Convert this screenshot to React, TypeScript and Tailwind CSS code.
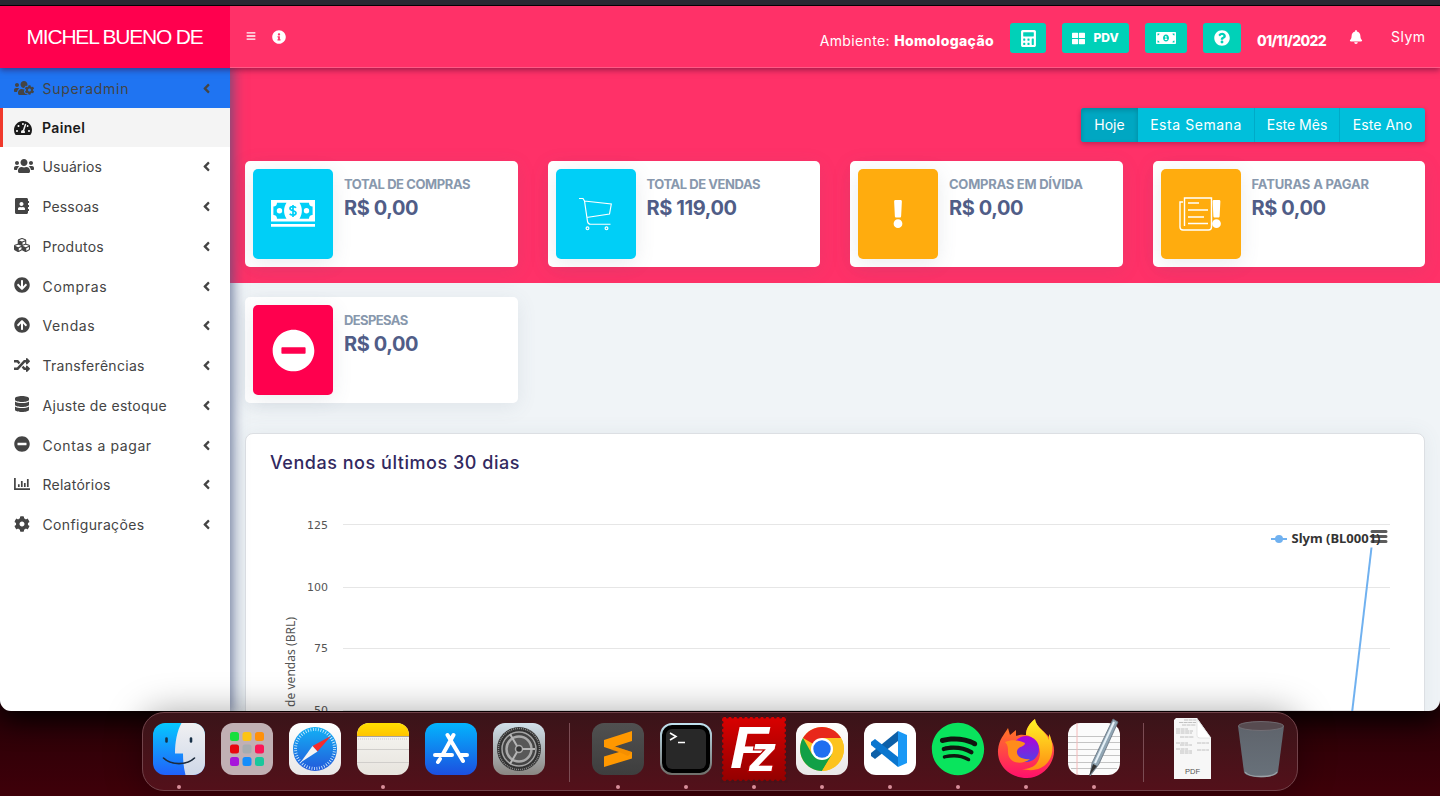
import React, { ReactNode } from "react";
import {
  FaAddressBook, FaAngleLeft, FaArrowCircleDown, FaArrowCircleUp, FaBars, FaBell, FaCalculator,
  FaCog, FaCubes, FaDatabase, FaExclamation, FaInfoCircle, FaMinusCircle, FaMoneyBillAlt,
  FaQuestionCircle, FaRandom, FaSpotify, FaTachometerAlt, FaThLarge, FaUsers, FaUsersCog,
} from "react-icons/fa";

function ReportIcon() {
  return (
    <svg width="16" height="16" viewBox="0 0 16 16" fill="none" stroke="#444" strokeWidth="1.7">
      <path d="M.9 2v11.200H16" /><path d="M4.800 11V8.200M7.800 11V5M10.800 11V7M13.800 11V3" />
    </svg>
  );
}

const menu = [
  { label: "Usuários", icon: <FaUsers size={20} />, track: "tracking-[0.1px]" },
  { label: "Pessoas", icon: <FaAddressBook size={16} />, track: "tracking-[0.15px]" },
  { label: "Produtos", icon: <FaCubes size={16} />, track: "tracking-[0.25px]" },
  { label: "Compras", icon: <FaArrowCircleDown size={16} />, track: "tracking-[0.7px]" },
  { label: "Vendas", icon: <FaArrowCircleUp size={16} />, track: "tracking-[0.6px]" },
  { label: "Transferências", icon: <FaRandom size={16} />, track: "tracking-[0.3px]" },
  { label: "Ajuste de estoque", icon: <FaDatabase size={16} />, track: "tracking-[0.3px]" },
  { label: "Contas a pagar", icon: <FaMinusCircle size={16} />, track: "tracking-[0.6px]" },
  { label: "Relatórios", icon: <ReportIcon />, track: "tracking-[0.25px]" },
  { label: "Configurações", icon: <FaCog size={16} />, track: "tracking-[0.35px]" },
];

function Sidebar() {
  return (
    <nav className="w-[230px] shrink-0 bg-white text-[14px] text-[#444] z-10 shadow-[0_0_12px_3px_rgba(70,85,130,0.75)]">
      <div className="flex h-10 items-center bg-[#1f74f2] pl-[14px] pr-[16px]">
        <FaUsersCog size={20} className="w-5" />
        <span className="ml-[8.5px] flex-1 tracking-[0.7px]">Superadmin</span>
        <FaAngleLeft size={15} />
      </div>
      <div className="flex h-[39px] items-center border-l-3 border-[#f0392b] bg-[#f4f4f4] pl-[11px] font-semibold text-[#1a1a1a]">
        <FaTachometerAlt size={18} className="w-[18px]" />
        <span className="ml-[10px] tracking-[0.35px]">Painel</span>
      </div>
      {menu.map((m) => (
        <div key={m.label} className="flex h-[39.75px] items-center pl-[14px] pr-[16px]">
          <span className="mb-[2px] flex w-[28.5px] shrink-0">{m.icon}</span>
          <span className={"flex-1 font-normal " + m.track}>{m.label}</span>
          <FaAngleLeft size={15} />
        </div>
      ))}
    </nav>
  );
}

function Header() {
  const btn = "flex h-[30px] items-center justify-center rounded-[3px] bg-[#00d1b8]";
  return (
    <header className="relative z-20 flex h-[62px] shrink-0 text-white shadow-[0_2px_6px_rgba(60,0,40,0.5)]">
      <div className="flex w-[230px] items-center bg-[#ff004e] pl-[26.5px] font-['Liberation_Sans',sans-serif] text-[21px] tracking-[-1.2px] whitespace-nowrap">
        MICHEL BUENO DE
      </div>
      <div className="flex flex-1 border-b border-[#ff5a86] bg-[#ff3168] pl-4 pr-[15px] text-[14px]">
        <FaBars size={10} className="mt-[25px]" />
        <FaInfoCircle size={14} className="ml-4 mt-6" />
        <div className="ml-auto flex items-start pt-[17px] whitespace-nowrap">
          <span className="mt-[7px] mr-4 tracking-[0.35px]">Ambiente: <b className="font-extrabold">Homologação</b></span>
          <span className={btn + " mr-4 w-9"}><FaCalculator size={17} /></span>
          <span className={btn + " mr-4 w-[67px] gap-2 text-[12px] font-extrabold"}><FaThLarge size={13} />PDV</span>
          <span className={btn + " mr-4 w-[42px]"}><FaMoneyBillAlt size={20} /></span>
          <span className={btn + " mr-4 w-[38px]"}><FaQuestionCircle size={16} /></span>
          <span className="mt-[7px] w-[70px] font-extrabold tracking-[-0.7px]">01/11/2022</span>
          <FaBell size={14} className="ml-[22px] mt-[7px]" />
          <span className="ml-[28px] mt-[3px] w-[34px] tracking-[0.5px]">Slym</span>
        </div>
      </div>
    </header>
  );
}

function CashIcon() {
  return (
    <svg width="44" height="28" viewBox="0 0 44 28" fill="white">
      <path d="M0 0h44v21.500H0zM0 24h44v2.700H0z" />
      <path d="M6 2.700h9.500c-3.200 5-3.200 11 0 16H6c0-2.200-1.200-3.700-3.600-3.700V6.400C4.800 6.400 6 4.900 6 2.700zM38 2.700h-9.500c3.200 5 3.200 11 0 16H38c0-2.200 1.200-3.700 3.600-3.700V6.400C39.200 6.400 38 4.900 38 2.700z" fill="#00cff7" />
      <circle cx="8.500" cy="10.700" r="2.700" /><circle cx="35.500" cy="10.700" r="2.700" />
      <path d="M25 7.800c-1-1.500-6-1.800-6 .7 0 2.900 6 1.500 6 4.500 0 2.700-5 2.500-6.300.700M22 5v12" fill="none" stroke="#00cff7" strokeWidth="1.700" />
    </svg>
  );
}
function CartIcon() {
  return (
    <svg width="34" height="34" viewBox="0 0 34 34" fill="none" stroke="white" strokeWidth="1.150">
      <path d="M0 1.500h4l1.500 2.500L8.500 24.500c.4 1.700 1.300 2.700 3 2.700h20M5.300 4l27 3-1.800 10L7.500 20.500" />
      <circle cx="8.500" cy="31.300" r="1.400" /><circle cx="27.500" cy="31.300" r="1.400" />
    </svg>
  );
}
function PaperAlert() {
  return (
    <div className="flex items-center text-white">
      <svg width="34" height="34" viewBox="0 0 34 34" fill="none" stroke="white" strokeWidth="1.400">
        <path d="M5.500 29V1H32.500v29c0 1.500-1 3-3 3H4c-2 0-3-1-3-3V5h3" />
        <path d="M9 6h11M9 13h20M9 20h16M9 26.500h20" />
      </svg>
      <FaExclamation size={28} className="-ml-[2px] w-[11px]" />
    </div>
  );
}

function Card({ title, value, color, track, children }: { title: string; value: string; color: string; track: string; children: ReactNode }) {
  return (
    <div className="flex h-[106px] rounded-[5px] bg-white p-2 shadow-[0_4px_20px_rgba(80,100,120,0.1)]">
      <div className={"flex h-[90px] w-20 items-center justify-center rounded-[5px] shadow-[0_4px_20px_rgba(80,100,120,0.12)] " + color}>{children}</div>
      <div className="ml-[11px] pt-[7px] whitespace-nowrap">
        <div className={"text-[13px] leading-4 font-bold text-[#8898ad] " + track}>{title}</div>
        <div className="mt-[3px] text-[20px] leading-[26px] font-bold tracking-[-0.4px] text-[#505d87]">{value}</div>
      </div>
    </div>
  );
}

function Chart() {
  return (
    <svg width="1178" height="230" viewBox="246 482 1178 230" className="block font-['DejaVu_Sans',sans-serif]">
      <path d="M343 524.500h1047M343 587.500h1047M343 648.500h1047M343 710.500h1047" stroke="#e6e6e6" />
      <g fontSize="11" fill="#555" textAnchor="end">
        <text x="328" y="529">125</text><text x="328" y="591">100</text><text x="328" y="652">75</text><text x="328" y="714">50</text>
        <text transform="translate(295 617) rotate(-90)" fontSize="12" textLength="90" className="font-['Noto_Sans',sans-serif]">de vendas (BRL)</text>
      </g>
      <path d="M1371.500 547.500L1352 713" stroke="#70b1f0" strokeWidth="2" />
      <path d="M1271 539h16" stroke="#70b1f0" strokeWidth="2" /><circle cx="1279" cy="539" r="4" fill="#70b1f0" />
      <text x="1291.500" y="543" fontSize="12" fontWeight="700" fill="#333" textLength="89" lengthAdjust="spacingAndGlyphs" className="font-['Noto_Sans',sans-serif]">Slym (BL0001)</text>
      <path d="M1372 531.500h14M1372 536.500h14M1372 541.500h14" stroke="#333" strokeOpacity=".8" strokeWidth="3" strokeLinecap="round" />
    </svg>
  );
}

function Content() {
  return (
    <main className="flex-1 overflow-hidden bg-[#f0f4f7]">
      <div className="h-[215px] bg-[#ff3168] px-[15px] pt-10">
        <div className="flex justify-end">
          <div className="flex h-[34px] overflow-hidden rounded-[3px] bg-[#00bfdb] text-[14px] whitespace-nowrap text-white shadow-[0_2px_5px_rgba(60,0,40,0.3)]">
            <span className="flex w-[57px] items-center justify-center bg-[#00a7c2] pb-[2px] shadow-[inset_0_2px_5px_rgba(0,0,0,0.2)]">Hoje</span>
            <span className="flex w-[116px] items-center justify-center pb-[2px] tracking-[0.55px]">Esta Semana</span>
            <span className="flex w-[85px] items-center justify-center border-l border-[#00aac8] pb-[2px]">Este Mês</span>
            <span className="flex w-[86px] items-center justify-center border-l border-[#00aac8] pb-[2px] tracking-[0.1px]">Este Ano</span>
          </div>
        </div>
        <div className="mt-[19px] grid grid-cols-4 gap-x-[30px] gap-y-[30px]">
          <Card title="TOTAL DE COMPRAS" value="R$ 0,00" color="bg-[#00cff7]" track="tracking-[-0.4px]"><CashIcon /></Card>
          <Card title="TOTAL DE VENDAS" value="R$ 119,00" color="bg-[#00cff7]" track="tracking-[-0.45px]"><CartIcon /></Card>
          <Card title="COMPRAS EM DÍVIDA" value="R$ 0,00" color="bg-[#ffac0e]" track="tracking-[-0.25px]"><FaExclamation size={28} color="white" /></Card>
          <Card title="FATURAS A PAGAR" value="R$ 0,00" color="bg-[#ffac0e]" track="tracking-[-0.15px]"><PaperAlert /></Card>
          <Card title="DESPESAS" value="R$ 0,00" color="bg-[#ff004e]" track="tracking-[-0.6px]"><FaMinusCircle size={43} color="white" /></Card>
        </div>
      </div>
      <section className="mx-[15px] mt-[150px] h-[290px] rounded-lg border border-[#dcdfe3] bg-white shadow-[0_0_20px_rgba(80,100,120,0.08)]">
        <h2 className="h-12 pl-6 pt-[15px] text-[18px] font-medium tracking-[0.53px] text-[#32295f]">Vendas nos últimos 30 dias</h2>
        <Chart />
      </section>
    </main>
  );
}

const S = ({ children }: { children: ReactNode }) => (
  <svg width="52" height="52" viewBox="0 0 52 52" className="block overflow-visible">{children}</svg>
);

function Defs() {
  const g = (id: string, a: string, b: string) => (
    <linearGradient id={id} x1="0" y1="0" x2="0" y2="1"><stop stopColor={a} /><stop offset="1" stopColor={b} /></linearGradient>
  );
  return (
    <defs>
      {g("finder", "#06c8ff", "#2161fa")}{g("face", "#f0f0f2", "#cfd8e8")}{g("blue", "#03b4fd", "#1c4fe0")}
      {g("safari", "#13b1f5", "#2359db")}{g("pref", "#d1e0ea", "#8a8682")}{g("note", "#f8f7f4", "#e7e4de")}
      {g("yellow", "#ffe000", "#ffc400")}{g("gray", "#505050", "#3e3e3e")}{g("white", "#ffffff", "#e9e7e7")}
      {g("fz", "#d90000", "#930000")}{g("trash", "#5f646c", "#68717a")}{g("fox", "#ff8a16", "#ff0f6c")}
      {g("foxy", "#fff526", "#ff8c12")}{g("globe", "#b300d6", "#5142e5")}{g("term", "#bfe0ee", "#70706c")}
    </defs>
  );
}

function Finder() {
  return <S><Defs /><rect width="52" height="52" rx="12" fill="url(#finder)" />
    <path d="M28.500 0H40c7 0 12 5 12 12v28c0 7-5 12-12 12h-7.500c-1.800-7-2.500-14-2.500-21.500h-8C22 19 24 8 28.500 0z" fill="url(#face)" />
    <path d="M13.500 15.500v3M38 15.500v3" stroke="#183047" strokeWidth="2.600" strokeLinecap="round" /><path d="M10.500 35c8 7.500 23 7.500 31 0" fill="none" stroke="#1c2b3c" strokeWidth="1.600" strokeLinecap="round" /></S>;
}
function Launchpad() {
  const c = ["#18df3c", "#fdc414", "#ff900b", "#e8060f", "#a6acb0", "#fb1657", "#a716dc", "#168dfb", "#1ac79c"];
  return <S><rect width="52" height="52" rx="12" fill="#c1b0b4" />{c.map((f, i) => <rect key={i} x={9 + (i % 3) * 12.500} y={9 + Math.floor(i / 3) * 12.500} width="9" height="9" rx="2.500" fill={f} />)}</S>;
}
function Safari() {
  return <S><rect width="52" height="52" rx="12" fill="url(#white)" /><circle cx="26" cy="26" r="22" fill="url(#safari)" />
    <circle cx="26" cy="26" r="19.500" fill="none" stroke="#d9f1ff" strokeWidth="3" strokeDasharray=".8 1.750" />
    <path d="M42 13L23.500 23l5 5.500z" fill="#f52b2b" /><path d="M11.500 39.500l12-16.500 5 5.500z" fill="#f4f4f4" /></S>;
}
function Notes() {
  return <S><rect width="52" height="52" rx="12" fill="url(#note)" /><path d="M0 13v-1C0 5 5 0 12 0h28c7 0 12 5 12 12v1z" fill="url(#yellow)" />
    <path d="M0 13.500h52" stroke="#a9a29a" /><path d="M1 16h50" stroke="#ccc" strokeWidth="1.200" strokeDasharray="1 1" /><path d="M0 26.500h52M0 39.500h52" stroke="#d0cecb" /></S>;
}
function Store() {
  return <S><rect width="52" height="52" rx="12" fill="url(#blue)" /><path d="M28.500 12L18 31M22.500 12L38 38M10 32h17M36 32h6M15 36l-2 3" stroke="#fff" strokeWidth="4" strokeLinecap="round" /></S>;
}
function Settings() {
  return <S><rect width="52" height="52" rx="12" fill="url(#pref)" /><circle cx="26" cy="26" r="22" fill="#323232" />
    <circle cx="26" cy="26" r="20.500" fill="none" stroke="#8c8c8c" strokeWidth="1.500" strokeDasharray="1 1" />
    <circle cx="26" cy="26" r="17" fill="#444" stroke="#a4a4a4" strokeWidth="1.500" /><circle cx="26" cy="26" r="12.500" fill="#585858" stroke="#aaa" strokeWidth="2.500" />
    <circle cx="26" cy="26" r="3.500" fill="#333" stroke="#aaa" strokeWidth="1.500" /><path d="M29 26h13M24 23l-7-12M24 29l-7 12" stroke="#b5b5b5" strokeWidth="2" /></S>;
}
function Sublime() {
  return <S><rect width="52" height="52" rx="12" fill="url(#gray)" /><path d="M12 17l28-9v10l-17 5.500 17 5.500v6.500L12 44V33.500l15-4.500-15-5z" fill="#ff9800" /><path d="M23 23.500L40 29l-4 4-9-4-8-2z" fill="#e68200" opacity=".4" /></S>;
}
function Terminal() {
  return <S><rect x="1" y="1" width="50" height="50" rx="11" fill="#000" stroke="url(#term)" strokeWidth="2" /><rect x="6" y="6" width="40" height="40" rx="6" fill="#282828" />
    <path d="M10 10l6 3.500-6 3.500M18 19.500h7" stroke="#fff" strokeWidth="1.600" fill="none" /></S>;
}
function FileZilla() {
  return <S><rect x="-6" y="-6" width="64" height="64" fill="url(#fz)" /><rect x="-6" y="-6" width="64" height="64" fill="none" stroke="#47131a" strokeWidth="3" strokeDasharray="0 5.333" strokeLinecap="round" />
    <g fill="#fff" className="font-['Liberation_Sans',sans-serif] font-bold italic">
      <text x="2" y="45" fontSize="60" textLength="39" lengthAdjust="spacingAndGlyphs">F</text>
      <text x="21" y="48" fontSize="52" textLength="27" lengthAdjust="spacingAndGlyphs" stroke="#b90000" strokeWidth="2.500" paintOrder="stroke">z</text>
    </g></S>;
}
function Chrome() {
  return <S><rect width="52" height="52" rx="12" fill="url(#white)" /><circle cx="26" cy="26" r="22" fill="#fcc31e" />
    <path d="M26 26L7 15a22 22 0 0 1 38 0H26z" fill="#e8271b" /><path d="M7 15a22 22 0 0 0 19 33l10-17H16z" fill="#12a047" /><path d="M26 15h19a22 22 0 0 1-19 33l10-16z" fill="#fcc31e" />
    <circle cx="26" cy="26" r="11" fill="white" /><circle cx="26" cy="26" r="8.700" fill="#1f6ff0" /></S>;
}
function Code() {
  return <S><rect width="52" height="52" rx="12" fill="white" /><path d="M34 8l9 4v28l-9 4z" fill="#1a98f5" /><path d="M34 8v10L11 36l-4-3v-3z" fill="#0d60a8" /><path d="M34 44V34L11 16l-4 3v3z" fill="#0a76cf" /></S>;
}
function Spotify() {
  return <div className="relative h-[52px] w-[52px]"><div className="absolute inset-1 rounded-full bg-[#10160f]" /><FaSpotify size={54} color="#09e45d" className="absolute -top-px -left-px max-w-none" /></div>;
}
function Firefox() {
  return <S><path d="M-2 27C-1 16 4 12 8 5l2 7 6-5v6c5-2 8-1 10-1 0-7 4-12 9-16 0 9 14 13 18 25 5 15-8 34-26 34C10 55-3 43-2 27z" fill="url(#fox)" />
    <path d="M35-4c-5 4-9 9-9 16 9 2 17 12 13 24-3 8-10 10-17 10 19 5 33-7 30-26-1-5-2-8-3-9v6C46 8 36 5 35-4z" fill="url(#foxy)" />
    <circle cx="26" cy="26" r="13" fill="url(#globe)" /><path d="M5 19c7-3 13-2 20 1 0 4-7 3-8 8-1 6 6 9 13 8-9 7-22 4-22-7 0-4 0-7-3-10z" fill="#ff8c1a" /></S>;
}
function TextEdit() {
  return <S><rect width="52" height="52" rx="12" fill="#fbfbfb" /><path d="M0 13.500h52M0 19.500h52M0 26.500h52M0 32.500h52M0 39.500h52M3 45.500h46" stroke="#c4c4c4" /><path d="M9 0v52" stroke="#f4b8b8" />
    <path d="M45-4l5 3-19 42-9 12 2-13z" fill="#91a6b4" stroke="#64717e" strokeWidth=".8" /><path d="M46-1L27 40" stroke="#e5f0f7" strokeWidth="2" /><path d="M25 41l-4 12 8-10z" fill="#333" /></S>;
}
function Pdf() {
  return <S><path d="M9-5h21l14 20v41H7V-3z" fill="#f7f7f7" /><path d="M30-5l14 20H31z" fill="#dcdcdc" /><path d="M30-4v16c0 2 1 3 3 3h11z" fill="#fff" stroke="#cfcfcf" strokeWidth=".5" />
    <path d="M17-3h12M12-.500h17M15 2h14M9 6h12M9 8h17M9 10h16M13 14h14M9 20h12M13 22h12M30 20h12M9 26h12M13 28h12M30 27h12M13 30h12" stroke="#b3b3b3" strokeDasharray="4 .6" strokeWidth=".8" />
    <text x="25.500" y="50.500" textAnchor="middle" fontSize="7.500" fill="#555" className="font-['Liberation_Sans',sans-serif]">PDF</text></S>;
}
function Trash() {
  return <S><path d="M3 3l6 46c2 7 32 7 34 0l6-46z" fill="url(#trash)" /><ellipse cx="26" cy="3" rx="22.500" ry="4.500" fill="#574b50" stroke="#77757b" strokeWidth=".8" /><path d="M10 49c4 6 28 6 32 0" fill="none" stroke="#9da2a7" strokeWidth="1.300" /></S>;
}

function AppSlot({ running, children }: { running?: boolean; children: ReactNode }) {
  return (
    <div className="flex h-[66px] flex-col items-center justify-between">
      {children}
      <span className={running ? "h-1 w-1 rounded-full bg-[#d98f9a]" : "h-1 w-1"} />
    </div>
  );
}

function Dock() {
  return (
    <div className="absolute top-[712px] left-[142px] z-30 flex h-[79px] w-[1156px] gap-4 rounded-[22px] border border-[#71434a] bg-linear-to-b from-[#3a1419] to-[#53101a] pt-[10px] pl-[10px] shadow-[0_0_36px_rgba(0,0,0,0.35)]">
      <AppSlot running><Finder /></AppSlot>
      <AppSlot><Launchpad /></AppSlot>
      <AppSlot><Safari /></AppSlot>
      <AppSlot running><Notes /></AppSlot>
      <AppSlot><Store /></AppSlot>
      <AppSlot><Settings /></AppSlot>
      <div className="mr-[6px] ml-2 h-[59px] w-px bg-[#7b4c53]" />
      <AppSlot running><Sublime /></AppSlot>
      <AppSlot running><Terminal /></AppSlot>
      <AppSlot running><FileZilla /></AppSlot>
      <AppSlot running><Chrome /></AppSlot>
      <AppSlot running><Code /></AppSlot>
      <AppSlot running><Spotify /></AppSlot>
      <AppSlot running><Firefox /></AppSlot>
      <AppSlot running><TextEdit /></AppSlot>
      <div className="mx-[7px] h-[59px] w-px bg-[#7b4c53]" />
      <AppSlot><Pdf /></AppSlot>
      <AppSlot><Trash /></AppSlot>
    </div>
  );
}

export default function App() {
  return (
    <div className="relative h-[796px] w-[1440px] overflow-hidden bg-linear-to-b from-[#2a0007] from-90% to-[#3f0009] font-['Inter',sans-serif]">
      <div className="flex h-[711px] flex-col overflow-hidden rounded-b-[11px] shadow-[0_8px_28px_#000]">
        <div className="h-[6px] shrink-0 border-b border-black bg-[#2b2933]" />
        <Header />
        <div className="flex min-h-0 flex-1">
          <Sidebar />
          <Content />
        </div>
      </div>
      <Dock />
    </div>
  );
}
